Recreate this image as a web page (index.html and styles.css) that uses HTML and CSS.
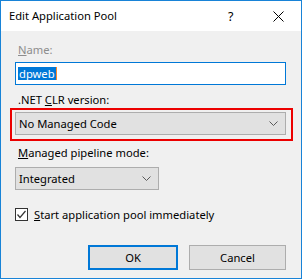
FILE: index.html
```html
<!DOCTYPE html>
<html lang="en">
<head>
    <meta charset="UTF-8">
    <title>Edit Application Pool</title>
    <link rel="stylesheet" href="styles.css">
</head>
<body>
    <div class="ventana">
        <div class="titulo">
            <span class="titulo-texto">Edit Application Pool</span>
            <span class="ayuda">?</span>
            <span class="cerrar">
                <svg width="11" height="11" viewBox="0 0 11 11"><path d="M0.5 0.5 L10.5 10.5 M10.5 0.5 L0.5 10.5" stroke="#000" stroke-width="1" fill="none"/></svg>
            </span>
        </div>
        <div class="contenido">
            <label class="etiqueta deshabilitada"><u>N</u>ame:</label>
            <div class="caja-texto"><span class="seleccion">dpweb</span><span class="cursor"></span></div>

            <label class="etiqueta">.NET <u>C</u>LR version:</label>
            <div class="marco-rojo">
                <div class="combo">
                    <span>No Managed Code</span>
                    <svg class="flecha" width="9" height="5" viewBox="0 0 9 5"><path d="M0.5 0.5 L4.5 4.5 L8.5 0.5" stroke="#5a5a5a" stroke-width="1" fill="none"/></svg>
                </div>
            </div>

            <label class="etiqueta"><u>M</u>anaged pipeline mode:</label>
            <div class="combo combo-corto">
                <span>Integrated</span>
                <svg class="flecha" width="9" height="5" viewBox="0 0 9 5"><path d="M0.5 0.5 L4.5 4.5 L8.5 0.5" stroke="#5a5a5a" stroke-width="1" fill="none"/></svg>
            </div>

            <div class="fila-check">
                <span class="check">
                    <svg width="11" height="11" viewBox="0 0 11 11"><path d="M1.5 5.5 L4 8.5 L9.5 2" stroke="#333" stroke-width="1.2" fill="none"/></svg>
                </span>
                <span><u>S</u>tart application pool immediately</span>
            </div>

            <div class="botones">
                <button class="ok">OK</button>
                <button>Cancel</button>
            </div>
        </div>
    </div>
</body>
</html>
```

FILE: styles.css
```css
* {
    box-sizing: border-box;
}
body {
    margin: 0;
    font-family: "Segoe UI", "Noto Sans", sans-serif;
    font-size: 11.2px;
    color: #000;
    background-color: #fff;
}
.ventana {
    width: 302px;
    height: 279px;
    border: 1px solid #1883d7;
    display: flex;
    flex-direction: column;
    background-color: #f0f0f0;
}
.titulo {
    height: 30px;
    display: flex;
    align-items: center;
    background-color: #fff;
    padding-left: 8px;
}
.titulo-texto {
    flex: 1;
    line-height: 16px;
}
.ayuda {
    width: 8px;
    font-size: 12.5px;
    margin-right: 37px;
}
.cerrar {
    display: flex;
    margin-right: 17px;
}
.contenido {
    flex: 1;
    display: flex;
    flex-direction: column;
    padding: 11px 14px 0 14px;
}
.etiqueta {
    line-height: 16px;
    margin-left: 3px;
}
.deshabilitada {
    color: #8d8d8d;
}
.caja-texto {
    margin-top: 4px;
    height: 23px;
    width: 271px;
    border: 1px solid #0078d7;
    background-color: #fff;
    display: flex;
    align-items: center;
    padding-left: 2px;
}
.seleccion {
    background-color: #0078d7;
    color: #fff;
    line-height: 13px;
    padding: 0 1px;
}
.cursor {
    width: 1px;
    height: 13px;
    background-color: #ff8728;
}
.caja-texto + .etiqueta {
    margin-top: 7px;
}
.marco-rojo {
    margin: 0 0 4px -5px;
    width: 283px;
    border: 2px solid #ec0000;
    padding: 2px 5px 4px 3px;
}
.combo {
    height: 23px;
    border: 1px solid #adadad;
    background-color: #e1e1e1;
    display: flex;
    align-items: center;
    padding: 0 7px 0 3px;
}
.combo span {
    flex: 1;
}
.combo-corto {
    margin-top: 6px;
    width: 144px;
}
.fila-check {
    display: flex;
    align-items: center;
    margin-top: 17px;
    gap: 6px;
}
.check {
    width: 13px;
    height: 13px;
    border: 1px solid #333;
    background-color: #fff;
    display: flex;
    align-items: center;
    justify-content: center;
}
.botones {
    display: flex;
    justify-content: flex-end;
    gap: 11px;
    margin-top: 23px;
    padding-right: 1px;
}
button {
    width: 97px;
    height: 25px;
    font-family: inherit;
    font-size: 11.2px;
    color: #000;
    background-color: #e1e1e1;
    border: 1px solid #adadad;
    padding: 0;
}
.ok {
    width: 90px;
    border: 2px solid #0078d7;
}
```
